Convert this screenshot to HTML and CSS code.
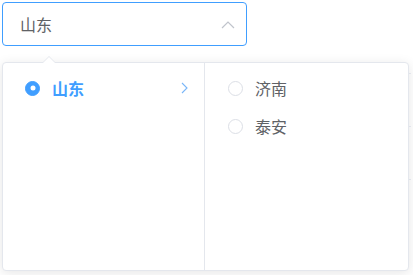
FILE: index.html
```html
<!DOCTYPE html>
<html lang="zh-CN">
<head>
    <meta charset="UTF-8">
    <meta name="viewport" content="width=device-width, initial-scale=1.0">
    <title>Cascader</title>
    <link rel="stylesheet" href="styles.css">
</head>
<body>

    <div class="page">
        <div class="cascader">
            <div class="cascader-input is-focus">
                <span class="cascader-value">山东</span>
                <svg class="caret" width="14" height="8" viewBox="0 0 14 8">
                    <path d="M1 7 L7 1 L13 7" fill="none" stroke="#c0c4cc" stroke-width="1.2"/>
                </svg>
            </div>

            <div class="cascader-panel">
                <div class="popper-arrow"></div>
                <ul class="menu">
                    <li class="node is-active">
                        <span class="radio is-checked"></span>
                        <span class="node-label">山东</span>
                        <svg class="node-arrow" width="7" height="12" viewBox="0 0 7 12">
                            <path d="M1 1 L6 6 L1 11" fill="none" stroke="#79b6f8" stroke-width="1.1"/>
                        </svg>
                    </li>
                </ul>
                <ul class="menu">
                    <li class="node">
                        <span class="radio"></span>
                        <span class="node-label">济南</span>
                    </li>
                    <li class="node">
                        <span class="radio"></span>
                        <span class="node-label">泰安</span>
                    </li>
                </ul>
            </div>
        </div>

        <div class="table">
            <div class="table-row"></div>
            <div class="table-row"></div>
        </div>
    </div>

</body>
</html>
```

FILE: styles.css
```css
:root {
    --primary: #409eff;
    --text: #606266;
    --border: #dcdfe6;
    --border-light: #e4e7ed;
}

html, body {
    min-height: 100%;
}

body {
    margin: 0;
    min-height: 275px;
    font-family: "Helvetica Neue", "Liberation Sans", "Noto Sans CJK SC", sans-serif;
    color: var(--text);
    background: #fff;
}

.page {
    padding: 2px;
}

.cascader {
    position: relative;
    width: 245px;
}

.cascader-input {
    height: 44px;
    box-sizing: border-box;
    border: 1px solid var(--border);
    border-radius: 4px;
    display: flex;
    align-items: center;
    justify-content: space-between;
    padding: 0 11px 0 17px;
    font-size: 16px;
}

.cascader-input.is-focus {
    border-color: var(--primary);
}

.caret {
    margin-top: 1px;
}

.cascader-panel {
    position: absolute;
    top: 60px;
    left: 0;
    z-index: 10;
    display: flex;
    background: #fff;
    border: 1px solid var(--border-light);
    border-radius: 4px;
    box-shadow: 0 2px 12px 0 rgba(0, 0, 0, 0.1);
}

.popper-arrow {
    position: absolute;
    top: -7px;
    left: 40px;
    width: 0;
    height: 0;
    border: 6px solid transparent;
    border-top-width: 0;
    border-bottom-color: var(--border-light);
}

.popper-arrow::after {
    content: "";
    position: absolute;
    top: 1px;
    left: -6px;
    border: 6px solid transparent;
    border-top-width: 0;
    border-bottom-color: #fff;
}

.menu {
    list-style: none;
    margin: 0;
    padding: 6px 0;
    width: 201px;
    height: 207px;
    box-sizing: border-box;
}

.menu + .menu {
    border-left: 1px solid var(--border-light);
    width: 204px;
}

.node {
    height: 38px;
    display: flex;
    align-items: center;
    padding: 0 16px 0 22px;
    font-size: 16px;
}

.menu + .menu .node {
    padding-left: 23px;
}

.node.is-active {
    color: var(--primary);
    font-weight: 700;
}

.radio {
    width: 15px;
    height: 15px;
    box-sizing: border-box;
    border: 1px solid var(--border);
    border-radius: 50%;
    background: #fff;
    margin-right: 12px;
    flex-shrink: 0;
    position: relative;
}

.radio.is-checked {
    background: var(--primary);
    border-color: var(--primary);
}

.radio.is-checked::after {
    content: "";
    position: absolute;
    width: 5px;
    height: 5px;
    border-radius: 50%;
    background: #fff;
    left: 50%;
    top: 50%;
    transform: translate(-50%, -50%);
}

.node-label {
    flex: 1;
}

.table {
    margin-top: 27px;
    border-top: 1px solid #ebeef5;
}

.table-row {
    height: 52px;
    border-bottom: 1px solid #ebeef5;
}
```
